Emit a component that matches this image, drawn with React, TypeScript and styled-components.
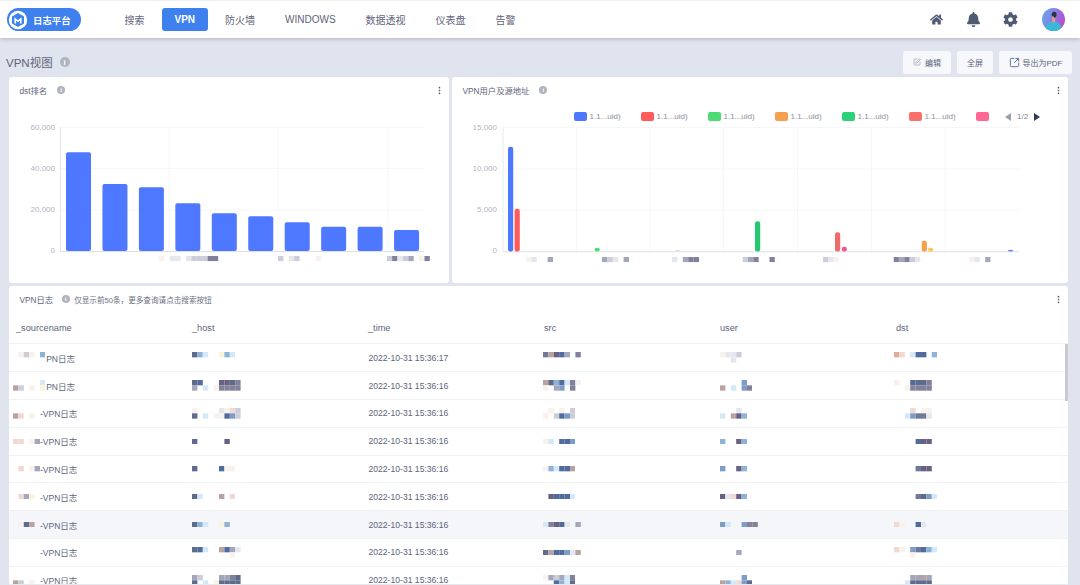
import React from 'react';
import styled, { createGlobalStyle } from 'styled-components';
import { FaBell, FaCog, FaHome } from 'react-icons/fa';
import { BsThreeDotsVertical } from 'react-icons/bs';
import { SquareArrowOutUpRight, SquarePen } from 'lucide-react';

const FONT = '"Liberation Sans", "Noto Sans CJK SC", sans-serif';

const GlobalStyle = createGlobalStyle`
  html, body {
    margin: 0;
    height: 585px;
    overflow: hidden;
    background: #e0e4ee;
    font-family: ${FONT};
  }
`;

const PALETTE: Record<string, string> = {
  a: '#5e6b8c',
  b: '#8fb2d8',
  c: '#d3e8f8',
  d: '#efd9d0',
  e: '#6f7a99',
  f: '#506c9f',
  g: '#b9a3a0',
  h: '#a3a7bb',
  i: '#e6e6ee',
  j: '#f8f1ec',
  k: '#fbf3da',
  l: '#e2ab95',
  m: '#81819b',
  n: '#6a5f85',
  o: '#7e9cc8',
  p: '#cbced9',
};

const CELL_W = 5.4;
const CELL_H = 5.33;

// blurred-out values in the screenshot, one string per line of blocks
const Mosaic: React.FC<{ rows: string[]; x?: number; y?: number }> = ({ rows, x, y }) => {
  const cols = Math.max(...rows.map((r) => r.length));
  return (
    <svg x={x} y={y} width={cols * CELL_W} height={rows.length * CELL_H} style={{ flex: 'none', display: 'block' }}>
      {rows.map((row, r) =>
        row.split('').map((c, i) =>
          PALETTE[c] ? (
            <rect key={`${r}-${i}`} x={i * CELL_W} y={r * CELL_H} width={CELL_W} height={CELL_H} fill={PALETTE[c]} />
          ) : null,
        ),
      )}
    </svg>
  );
};

const Page = styled.div`
  width: 1080px;
  height: 585px;
  display: flex;
  flex-direction: column;
  overflow: hidden;
`;

const Header = styled.header`
  height: 37px;
  flex: none;
  display: flex;
  align-items: center;
  padding-left: 7px;
  background: #fff;
  border-top: 1px solid #efefef;
  box-shadow: 0 1px 4px rgba(120, 125, 145, 0.45);
`;

const Brand = styled.div`
  width: 74px;
  height: 23px;
  box-sizing: border-box;
  display: flex;
  align-items: center;
  gap: 5px;
  padding-left: 1px;
  border-radius: 12px;
  background: #3e80ee;
  color: #fff;
  font-size: 9.4px;
  font-weight: 700;
`;

const Nav = styled.nav`
  display: flex;
  gap: 5px;
  margin-left: 31px;
`;

const NavItem = styled.a<{ $active?: boolean }>`
  height: 23px;
  padding: 0 12.5px;
  display: flex;
  align-items: center;
  border-radius: 3px;
  font-size: 10px;
  color: ${(p) => (p.$active ? '#fff' : '#5f6478')};
  font-weight: ${(p) => (p.$active ? 700 : 400)};
  background: ${(p) => (p.$active ? '#3e80ee' : 'transparent')};
`;

const HeaderIcons = styled.div`
  margin-left: auto;
  margin-right: 15px;
  display: flex;
  align-items: center;
  color: #515a75;
`;

const IconSlot = styled.div`
  width: 37px;
  display: flex;
  justify-content: center;
`;

const Avatar = styled.div`
  width: 23px;
  height: 23px;
  margin-left: 13px;
  border-radius: 50%;
  overflow: hidden;
`;

const TitleRow = styled.div`
  height: 39px;
  flex: none;
  box-sizing: border-box;
  display: flex;
  align-items: center;
  padding: 11px 8px 2px 6px;
`;

const ViewTitle = styled.h1`
  margin: 0 7px 0 0;
  font-size: 11.5px;
  font-weight: 400;
  color: #5d6479;
`;

const Info = styled.span<{ $size?: number }>`
  width: ${(p) => p.$size ?? 8}px;
  height: ${(p) => p.$size ?? 8}px;
  flex: none;
  display: inline-flex;
  align-items: center;
  justify-content: center;
  border-radius: 50%;
  background: #b1b4be;
  color: #fff;
  font-size: ${(p) => (p.$size ?? 8) - 2}px;
  font-weight: 700;
`;

const Actions = styled.div`
  margin-left: auto;
  display: flex;
  gap: 6px;
`;

const ActionButton = styled.button<{ $width: number; $gap?: number }>`
  width: ${(p) => p.$width}px;
  height: 23px;
  padding: 0;
  display: flex;
  align-items: center;
  justify-content: center;
  gap: ${(p) => p.$gap ?? 4}px;
  border: none;
  border-radius: 3px;
  background: #f6f8fc;
  color: #5d6479;
  font-family: ${FONT};
  font-size: 8px;
`;

const Content = styled.main`
  flex: 1;
  display: flex;
  flex-direction: column;
  gap: 3px;
  margin: 0 12px 0 9px;
  min-height: 0;
`;

const ChartRow = styled.div`
  height: 206px;
  flex: none;
  display: grid;
  grid-template-columns: 440px 616px;
  gap: 3px;
`;

const Panel = styled.section`
  position: relative;
  background: #fff;
  border-radius: 3px;
  overflow: hidden;
  display: flex;
  flex-direction: column;
`;

const PanelHeader = styled.div`
  height: 26px;
  flex: none;
  display: flex;
  align-items: center;
  padding: 0 5.5px 0 10.5px;
`;

const PanelTitle = styled.span`
  margin-right: 10px;
  font-size: 8.3px;
  color: #5d6479;
`;

const TableTitle = styled(PanelTitle)`
  margin-right: 8.5px;
`;

const Note = styled.span`
  margin-left: 4.5px;
  font-size: 7.6px;
  color: #6a6f80;
`;

const Kebab = styled(BsThreeDotsVertical)`
  margin-left: auto;
  width: 9px;
  height: 9px;
  color: #4f5873;
`;

const ChartSvg = styled.svg`
  display: block;
  flex: none;
`;

const Tick = styled.text`
  font-family: ${FONT};
  font-size: 8px;
  fill: #b2b4c0;
  text-anchor: end;
  dominant-baseline: central;
`;

const Legend = styled.div`
  height: 9px;
  flex: none;
  display: flex;
  align-items: center;
  margin: 9px 0 0 121.5px;
`;

const LegendItem = styled.div<{ $width: number }>`
  width: ${(p) => p.$width}px;
  flex: none;
  display: flex;
  align-items: center;
  gap: 3px;
  font-size: 8px;
  color: #8b8f9f;
`;

const Swatch = styled.i<{ $color: string }>`
  width: 13px;
  height: 9px;
  flex: none;
  border-radius: 2px;
  background: ${(p) => p.$color};
`;

const Arrow = styled.i<{ $dir: 'left' | 'right' }>`
  width: 0;
  height: 0;
  flex: none;
  border-top: 4.5px solid transparent;
  border-bottom: 4.5px solid transparent;
  ${(p) =>
    p.$dir === 'left' ? 'border-right: 6px solid #9aa0ad;' : 'border-left: 6px solid #2f3d52;'}
`;

const PageNo = styled.span`
  margin: 0 6px;
  font-size: 8px;
  color: #7f8393;
`;

const TablePanel = styled(Panel)`
  flex: 1;
  min-height: 0;
`;

const HeadRow = styled.div`
  height: 32.4px;
  flex: none;
  box-sizing: border-box;
  display: grid;
  grid-template-columns: repeat(5, 176px) 1fr;
  align-items: center;
  border-bottom: 1px solid #f1f2f6;
`;

const HeadCell = styled.div`
  padding-left: 7px;
  font-size: 9.2px;
  color: #5d6479;
`;

const Row = styled.div<{ $hover?: boolean }>`
  height: 27.8px;
  flex: none;
  box-sizing: border-box;
  display: grid;
  grid-template-columns: repeat(5, 176px) 1fr;
  align-items: center;
  border-bottom: 1px solid #f1f2f6;
  background: ${(p) => (p.$hover ? '#f4f6fa' : '#fff')};
`;

const SourceCell = styled.div`
  width: 62px;
  margin-left: 4px;
  display: flex;
  align-items: center;
  justify-content: space-between;
  font-size: 8.5px;
  color: #5d6479;
  white-space: nowrap;
`;

const TimeCell = styled.div`
  padding-left: 7.5px;
  font-size: 8.6px;
  color: #5d6479;
`;

const MaskCell = styled.div<{ $inset: number }>`
  padding-left: ${(p) => p.$inset}px;
`;

const Scrollbar = styled.div`
  position: absolute;
  top: 58px;
  right: 0;
  width: 3px;
  height: 57px;
  background: #c9cbd1;
`;

const BottomBar = styled.div`
  position: absolute;
  left: 0;
  right: 0;
  bottom: 0;
  height: 1.5px;
  background: #e6e8ee;
`;

const navItems = ['搜索', 'VPN', '防火墙', 'WINDOWS', '数据透视', '仪表盘', '告警'];

const dstBars = [152.3, 184, 187.3, 203.3, 213.3, 216.3, 222.3, 226.7, 226.7, 230];

const legend = ['#4e78ff', '#ff5b5b', '#4bdc74', '#f3a14f', '#2bd27a', '#fb6f6a'];

const userBars = [
  { x: 508, top: 146.7, color: '#4e78ff' },
  { x: 514.6, top: 208.7, color: '#ff5b5b' },
  { x: 594.6, top: 247.7, color: '#4bdc74' },
  { x: 675, top: 250, color: '#fbd9b0' },
  { x: 755, top: 221.3, color: '#22c970' },
  { x: 835, top: 232.3, color: '#ef6a6a' },
  { x: 841.7, top: 246.7, color: '#ee5a8f' },
  { x: 921.7, top: 240.7, color: '#f5a04a' },
  { x: 928, top: 247.7, color: '#fbc94f' },
  { x: 1008, top: 249.7, color: '#6a85f5' },
];

const userLabels: [number, string][] = [
  [526, 'ji..h'],
  [602, 'hpi.h'],
  [672, 'i.hmm'],
  [742.5, 'phm..m'],
  [823, 'pij'],
  [893.5, 'mhmpi'],
  [969, 'ji.h'],
];

const dstLabels: [number, string][] = [
  [159, 'j.ii.ipppmm'],
  [278, 'p.ip...j'],
  [386.7, 'pmiph.jm'],
];

interface LogRow {
  source: string[];
  name: string;
  host: string[];
  time: string;
  src: string[];
  user: string[];
  dst: string[];
}

const logs: LogRow[] = [
  { source: ['.jpj.b', '......'], name: 'PN日志', host: ['abc..kbc', '........'], time: '2022-10-31 15:36:17', src: ['egnfh.m', '.......'], user: ['jiip', '..i.'], dst: ['ld.cff.b', '........'] },
  { source: ['.....c', 'gp.j.k'], name: 'PN日志', host: ['af...nnam', 'h.c.jmmmm'], time: '2022-10-31 15:36:16', src: ['gabfcmj', 'j.ho.m.'], user: ['....o.', 'g.c.om'], dst: ['j..faam', '..jmmmm'] },
  { source: ['.....', 'gd.j.'], name: '-VPN日志', host: ['j....ijdp', 'a.c.jjfop'], time: '2022-10-31 15:36:16', src: ['.j.j.p', 'j.pfop'], user: ['...i.', 'c.gnb'], dst: ['...d.jj', '..coeei'] },
  { source: ['dd.jh'], name: '-VPN日志', host: ['a.....n'], time: '2022-10-31 15:36:16', src: ['jc.ffo'], user: ['b..nb'], dst: ['....fnn'] },
  { source: ['.d.jh'], name: '-VPN日志', host: ['a....fjj'], time: '2022-10-31 15:36:16', src: ['jbcffg'], user: ['o..nb'], dst: ['....enn'] },
  { source: ['.dhk.'], name: '-VPN日志', host: ['ac...g.d'], time: '2022-10-31 15:36:16', src: ['.nfffc'], user: ['nidnb'], dst: ['....eaoc'] },
  { source: ['.jag.'], name: '-VPN日志', host: ['abc..kb'], time: '2022-10-31 15:36:16', src: ['cmnfi.h'], user: ['oc..omm'], dst: ['dj..fi'] },
  { source: ['.....'], name: '-VPN日志', host: ['afc..gfhi', '.......j.'], time: '2022-10-31 15:36:16', src: ['agffoig'], user: ['...h'], dst: ['dj.oefbc', '...j....'] },
  { source: ['.....', 'gp.j.'], name: '-VPN日志', host: ['hp...hhma', 'a.c.kaaaa'], time: '2022-10-31 15:36:16', src: ['jhphcm', '..fbca'], user: ['....o.', 'gbcdoa'], dst: ['...hhgh', '..caaaa'] },
];

const BrandMark = () => (
  <svg width="20" height="20" viewBox="0 0 20 20">
    <circle cx="10" cy="10" r="9.2" fill="#fff" />
    <path d="M10 3l6 3.4v7.2L10 17l-6-3.4V6.400z" fill="#3e80ee" />
    <path d="M6.400 13.500V7.300l3.600 3 3.600-3v6.200h-1.700v-2.900L10 12.300l-1.900-1.700v2.900z" fill="#fff" />
  </svg>
);

const AvatarArt = () => (
  <svg width="23" height="23" viewBox="0 0 23 23">
    <defs>
      <linearGradient id="avatarBg" x1="0" y1="0.2" x2="1" y2="0.6">
        <stop offset="0" stopColor="#62aaf0" />
        <stop offset="1" stopColor="#b64ccc" />
      </linearGradient>
    </defs>
    <rect width="23" height="23" fill="url(#avatarBg)" />
    <path d="M3 23c.4-6 2.800-9.500 8.500-9.500S19.600 17 20 23z" fill="#3cb8d6" />
    <rect x="10.200" y="9" width="3" height="5.200" fill="#d9a08f" />
    <path d="M9.600 7c0-2 1.200-3.200 2.600-3.200s2.400 1 2.400 2.600c0 1.800-.8 3.400-2 3.400-.4 0-.6-1-1-1.600-.8 0-2 0-2-1.200z" fill="#2c3448" />
  </svg>
);

const App: React.FC = () => (
  <Page>
    <GlobalStyle />
    <Header>
      <Brand>
        <BrandMark />
        日志平台
      </Brand>
      <Nav>
        {navItems.map((item) => (
          <NavItem key={item} $active={item === 'VPN'}>
            {item}
          </NavItem>
        ))}
      </Nav>
      <HeaderIcons>
        <IconSlot>
          <FaHome size={13} />
        </IconSlot>
        <IconSlot>
          <FaBell size={15} />
        </IconSlot>
        <IconSlot>
          <FaCog size={15} />
        </IconSlot>
        <Avatar>
          <AvatarArt />
        </Avatar>
      </HeaderIcons>
    </Header>

    <TitleRow>
      <ViewTitle>VPN视图</ViewTitle>
      <Info $size={10}>i</Info>
      <Actions>
        <ActionButton $width={48}>
          <SquarePen size={8} color="#9a9fae" />
          编辑
        </ActionButton>
        <ActionButton $width={36}>全屏</ActionButton>
        <ActionButton $width={73} $gap={3}>
          <SquareArrowOutUpRight size={11} color="#5a6a95" />
          导出为PDF
        </ActionButton>
      </Actions>
    </TitleRow>

    <Content>
      <ChartRow>
        <Panel>
          <PanelHeader>
            <PanelTitle>dst排名</PanelTitle>
            <Info>i</Info>
            <Kebab />
          </PanelHeader>
          <ChartSvg width="440" height="180" viewBox="9 103 440 180">
            {[169, 278, 388].map((x) => (
              <line key={x} x1={x} x2={x} y1={127} y2={251} stroke="#f5f6fa" />
            ))}
            {[127.5, 168.5, 210].map((y) => (
              <line key={y} x1={60} x2={424} y1={y} y2={y} stroke="#f5f6fa" />
            ))}
            <line x1={60.5} x2={60.5} y1={127} y2={251} stroke="#e4e6f0" />
            <line x1={60} x2={424} y1={251.5} y2={251.5} stroke="#dde0ea" />
            {dstBars.map((top, i) => (
              <rect key={i} x={66 + i * 36.45} y={top} width={25} height={251 - top} rx={2} fill="#4e78ff" />
            ))}
            <Tick x={55} y={127}>60,000</Tick>
            <Tick x={55} y={168}>40,000</Tick>
            <Tick x={55} y={209.5}>20,000</Tick>
            <Tick x={55} y={250.5}>0</Tick>
            {dstLabels.map(([x, cells]) => (
              <Mosaic key={x} x={x} y={256} rows={[cells]} />
            ))}
          </ChartSvg>
        </Panel>

        <Panel>
          <PanelHeader>
            <PanelTitle>VPN用户及源地址</PanelTitle>
            <Info>i</Info>
            <Kebab />
          </PanelHeader>
          <Legend>
            {legend.map((color) => (
              <LegendItem key={color} $width={67}>
                <Swatch $color={color} />
                1.1...uid)
              </LegendItem>
            ))}
            <LegendItem $width={29.5}>
              <Swatch $color="#ff6694" />
            </LegendItem>
            <Arrow $dir="left" />
            <PageNo>1/2</PageNo>
            <Arrow $dir="right" />
          </Legend>
          <ChartSvg width="616" height="162" viewBox="452 121 616 162">
            {[576.6, 650, 723.6, 797.5, 871.5, 945].map((x) => (
              <line key={x} x1={x} x2={x} y1={127.5} y2={251} stroke="#f5f6fa" />
            ))}
            {[127.5, 169, 210].map((y) => (
              <line key={y} x1={503} x2={1019} y1={y} y2={y} stroke="#f5f6fa" />
            ))}
            <line x1={503} x2={503} y1={127.5} y2={251} stroke="#e8eaf2" />
            <line x1={503} x2={1019} y1={251.7} y2={251.7} stroke="#dde0ea" />
            {userBars.map((b) => (
              <rect key={b.x} x={b.x} y={b.top} width={5.2} height={251.5 - b.top} rx={2.2} fill={b.color} />
            ))}
            <Tick x={497} y={127}>15,000</Tick>
            <Tick x={497} y={168}>10,000</Tick>
            <Tick x={497} y={209.5}>5,000</Tick>
            <Tick x={497} y={250.5}>0</Tick>
            {userLabels.map(([x, cells]) => (
              <Mosaic key={x} x={x} y={257} rows={[cells]} />
            ))}
          </ChartSvg>
        </Panel>
      </ChartRow>

      <TablePanel>
        <PanelHeader>
          <TableTitle>VPN日志</TableTitle>
          <Info>i</Info>
          <Note>仅显示前50条，更多查询请点击搜索按钮</Note>
          <Kebab />
        </PanelHeader>
        <HeadRow>
          {['_sourcename', '_host', '_time', 'src', 'user', 'dst'].map((col) => (
            <HeadCell key={col}>{col}</HeadCell>
          ))}
        </HeadRow>
        {logs.map((log, i) => (
          <Row key={i} $hover={i === 6}>
            <SourceCell>
              <Mosaic rows={log.source} />
              {log.name}
            </SourceCell>
            <MaskCell $inset={7}>
              <Mosaic rows={log.host} />
            </MaskCell>
            <TimeCell>{log.time}</TimeCell>
            <MaskCell $inset={6}>
              <Mosaic rows={log.src} />
            </MaskCell>
            <MaskCell $inset={7}>
              <Mosaic rows={log.user} />
            </MaskCell>
            <MaskCell $inset={5}>
              <Mosaic rows={log.dst} />
            </MaskCell>
          </Row>
        ))}
        <Scrollbar />
        <BottomBar />
      </TablePanel>
    </Content>
  </Page>
);

export default App;
